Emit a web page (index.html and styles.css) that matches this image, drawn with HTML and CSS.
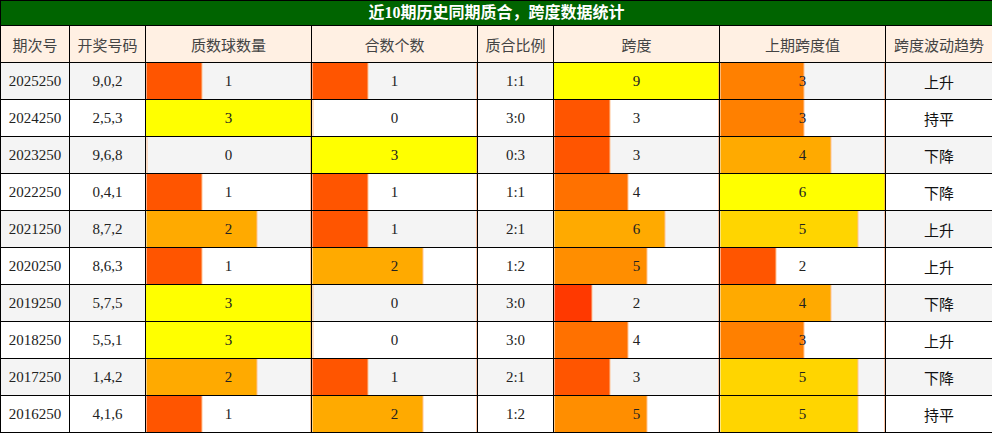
FILE: index.html
```html
<!DOCTYPE html>
<html lang="zh">
<head>
<meta charset="utf-8">
<title>近10期历史同期质合，跨度数据统计</title>
<link rel="stylesheet" href="styles.css">
</head>
<body>
<table class="stats">
  <colgroup>
    <col class="c-issue"><col class="c-nums"><col class="c-bar"><col class="c-bar">
    <col class="c-ratio"><col class="c-bar"><col class="c-bar"><col class="c-trend">
  </colgroup>
  <thead>
    <tr><th class="title" colspan="8">近10期历史同期质合，跨度数据统计</th></tr>
    <tr class="head">
      <th>期次号</th><th>开奖号码</th><th>质数球数量</th><th>合数个数</th>
      <th>质合比例</th><th>跨度</th><th>上期跨度值</th><th>跨度波动趋势</th>
    </tr>
  </thead>
  <tbody>
    <tr class="odd"><td>2025250</td><td>9,0,2</td>
      <td class="bar" style="--w:33.333%;--c:rgb(255,85,0)">1</td>
      <td class="bar" style="--w:33.333%;--c:rgb(255,85,0)">1</td>
      <td>1:1</td>
      <td class="bar" style="--w:100%;--c:rgb(255,255,0)">9</td>
      <td class="bar" style="--w:50%;--c:rgb(255,128,0)">3</td>
      <td class="trend">上升</td></tr>
    <tr><td>2024250</td><td>2,5,3</td>
      <td class="bar" style="--w:100%;--c:rgb(255,255,0)">3</td>
      <td class="bar" style="--w:0%;--c:transparent">0</td>
      <td>3:0</td>
      <td class="bar" style="--w:33.333%;--c:rgb(255,85,0)">3</td>
      <td class="bar" style="--w:50%;--c:rgb(255,128,0)">3</td>
      <td class="trend">持平</td></tr>
    <tr class="odd"><td>2023250</td><td>9,6,8</td>
      <td class="bar" style="--w:0%;--c:transparent">0</td>
      <td class="bar" style="--w:100%;--c:rgb(255,255,0)">3</td>
      <td>0:3</td>
      <td class="bar" style="--w:33.333%;--c:rgb(255,85,0)">3</td>
      <td class="bar" style="--w:66.667%;--c:rgb(255,170,0)">4</td>
      <td class="trend">下降</td></tr>
    <tr><td>2022250</td><td>0,4,1</td>
      <td class="bar" style="--w:33.333%;--c:rgb(255,85,0)">1</td>
      <td class="bar" style="--w:33.333%;--c:rgb(255,85,0)">1</td>
      <td>1:1</td>
      <td class="bar" style="--w:44.444%;--c:rgb(255,113,0)">4</td>
      <td class="bar" style="--w:100%;--c:rgb(255,255,0)">6</td>
      <td class="trend">下降</td></tr>
    <tr class="odd"><td>2021250</td><td>8,7,2</td>
      <td class="bar" style="--w:66.667%;--c:rgb(255,170,0)">2</td>
      <td class="bar" style="--w:33.333%;--c:rgb(255,85,0)">1</td>
      <td>2:1</td>
      <td class="bar" style="--w:66.667%;--c:rgb(255,170,0)">6</td>
      <td class="bar" style="--w:83.333%;--c:rgb(255,213,0)">5</td>
      <td class="trend">上升</td></tr>
    <tr><td>2020250</td><td>8,6,3</td>
      <td class="bar" style="--w:33.333%;--c:rgb(255,85,0)">1</td>
      <td class="bar" style="--w:66.667%;--c:rgb(255,170,0)">2</td>
      <td>1:2</td>
      <td class="bar" style="--w:55.556%;--c:rgb(255,142,0)">5</td>
      <td class="bar" style="--w:33.333%;--c:rgb(255,85,0)">2</td>
      <td class="trend">上升</td></tr>
    <tr class="odd"><td>2019250</td><td>5,7,5</td>
      <td class="bar" style="--w:100%;--c:rgb(255,255,0)">3</td>
      <td class="bar" style="--w:0%;--c:transparent">0</td>
      <td>3:0</td>
      <td class="bar" style="--w:22.222%;--c:rgb(255,57,0)">2</td>
      <td class="bar" style="--w:66.667%;--c:rgb(255,170,0)">4</td>
      <td class="trend">下降</td></tr>
    <tr><td>2018250</td><td>5,5,1</td>
      <td class="bar" style="--w:100%;--c:rgb(255,255,0)">3</td>
      <td class="bar" style="--w:0%;--c:transparent">0</td>
      <td>3:0</td>
      <td class="bar" style="--w:44.444%;--c:rgb(255,113,0)">4</td>
      <td class="bar" style="--w:50%;--c:rgb(255,128,0)">3</td>
      <td class="trend">上升</td></tr>
    <tr class="odd"><td>2017250</td><td>1,4,2</td>
      <td class="bar" style="--w:66.667%;--c:rgb(255,170,0)">2</td>
      <td class="bar" style="--w:33.333%;--c:rgb(255,85,0)">1</td>
      <td>2:1</td>
      <td class="bar" style="--w:33.333%;--c:rgb(255,85,0)">3</td>
      <td class="bar" style="--w:83.333%;--c:rgb(255,213,0)">5</td>
      <td class="trend">下降</td></tr>
    <tr><td>2016250</td><td>4,1,6</td>
      <td class="bar" style="--w:33.333%;--c:rgb(255,85,0)">1</td>
      <td class="bar" style="--w:66.667%;--c:rgb(255,170,0)">2</td>
      <td>1:2</td>
      <td class="bar" style="--w:55.556%;--c:rgb(255,142,0)">5</td>
      <td class="bar" style="--w:83.333%;--c:rgb(255,213,0)">5</td>
      <td class="trend">持平</td></tr>
  </tbody>
</table>
</body>
</html>
```

FILE: styles.css
```css
html, body {
  margin: 0;
  padding: 0;
  background: #ffffff;
}

.stats {
  width: 992px;
  table-layout: fixed;
  border-collapse: collapse;
  font-family: "Liberation Serif", "Noto Sans CJK SC", serif;
  font-size: 15px;
  color: #222;
}

.c-issue { width: 69px; }
.c-nums { width: 76px; }
.c-bar { width: 166px; }
.c-ratio { width: 76px; }
.c-trend { width: 107px; }

.stats th,
.stats td {
  border: 1px solid #000;
  padding: 0;
  text-align: center;
  vertical-align: middle;
}

.stats .title {
  height: 24px;
  background: #006400;
  color: #fff;
  font-size: 16px;
  font-weight: bold;
  line-height: 24px;
}

.head th {
  height: 36px;
  background: #fff0e3;
  color: #444;
  font-family: "Noto Sans CJK SC", sans-serif;
  font-weight: normal;
  font-size: 15px;
}

.stats tbody td {
  height: 36px;
  background-color: #fff;
}

.stats tbody tr.odd td {
  background-color: #f4f4f4;
}

.stats tbody td.bar {
  background-image: linear-gradient(to right,
    var(--c) var(--w),
    rgba(255, 190, 140, 0.9) var(--w),
    rgba(255, 190, 140, 0.9) calc(var(--w) + 1px),
    transparent calc(var(--w) + 1px));
  box-shadow: inset -1px 0 0 rgba(255, 150, 90, 0.55);
}

.stats td.trend {
  font-family: "Noto Sans CJK SC", sans-serif;
  color: #111;
  font-size: 15px;
}
```
